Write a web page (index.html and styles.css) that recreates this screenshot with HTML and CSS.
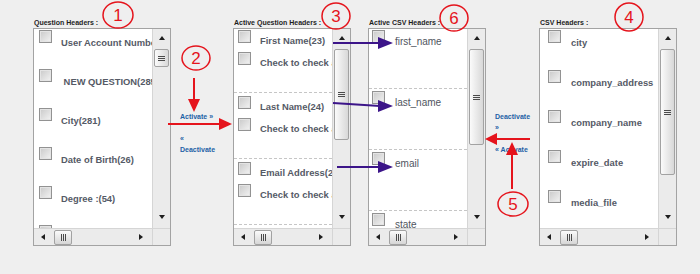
FILE: index.html
```html
<!DOCTYPE html>
<html lang="en">
<head>
    <meta charset="UTF-8">
    <title>Map CSV Headers</title>
    <link rel="stylesheet" href="styles.css">
</head>
<body>
    <div class="mapper">
        <!-- question headers -->
        <div class="panel panel-wide">
            <div class="panel-title">Question Headers :</div>
            <div class="box">
                <div class="list list-q">
                    <div class="item"><span class="check"></span><span class="name">User Account Number(22)</span></div>
                    <div class="item"><span class="check"></span><span class="name">&nbsp;NEW QUESTION(285)</span></div>
                    <div class="item"><span class="check"></span><span class="name">City(281)</span></div>
                    <div class="item"><span class="check"></span><span class="name">Date of Birth(26)</span></div>
                    <div class="item"><span class="check"></span><span class="name">Degree :(54)</span></div>
                    <div class="item"><span class="check"></span><span class="name">Email(27)</span></div>
                </div>
                <div class="vscroll">
                    <span class="btn-up"></span>
                    <span class="vthumb" style="height: 18px"><span class="grip-h"></span></span>
                    <span class="btn-down"></span>
                </div>
                <div class="hscroll">
                    <span class="btn-left"></span>
                    <span class="hthumb"><span class="grip-v"></span></span>
                    <span class="btn-right"></span>
                </div>
                <div class="corner"></div>
            </div>
        </div>

        <div class="mover mover-left">
            <a href="#">Activate &raquo;</a>
            <a href="#">&laquo;<br>Deactivate</a>
        </div>

        <!-- active question headers -->
        <div class="panel panel-narrow">
            <div class="panel-title">Active Question Headers :</div>
            <div class="box">
                <div class="list list-aq">
                    <div class="group">
                        <div class="row"><span class="check"></span><span class="name">First Name(23)</span></div>
                        <div class="row"><span class="check"></span><span class="name">Check to check all</span></div>
                    </div>
                    <div class="group">
                        <div class="row"><span class="check"></span><span class="name">Last Name(24)</span></div>
                        <div class="row"><span class="check"></span><span class="name">Check to check all</span></div>
                    </div>
                    <div class="group">
                        <div class="row"><span class="check"></span><span class="name">Email Address(25)</span></div>
                        <div class="row"><span class="check"></span><span class="name">Check to check all</span></div>
                    </div>
                    <div class="group">
                        <div class="row"><span class="check"></span><span class="name">Phone(29)</span></div>
                    </div>
                </div>
                <div class="vscroll">
                    <span class="btn-up"></span>
                    <span class="vthumb" style="height: 91px"><span class="grip-h"></span></span>
                    <span class="btn-down"></span>
                </div>
                <div class="hscroll">
                    <span class="btn-left"></span>
                    <span class="hthumb"><span class="grip-v"></span></span>
                    <span class="btn-right"></span>
                </div>
                <div class="corner"></div>
            </div>
        </div>

        <!-- active csv headers -->
        <div class="panel panel-narrow panel-gap">
            <div class="panel-title">Active CSV Headers :</div>
            <div class="box">
                <div class="list list-ac">
                    <div class="group"><span class="check"></span><span class="name">first_name</span></div>
                    <div class="group"><span class="check"></span><span class="name">last_name</span></div>
                    <div class="group"><span class="check"></span><span class="name">email</span></div>
                    <div class="group"><span class="check"></span><span class="name">state</span></div>
                </div>
                <div class="vscroll">
                    <span class="btn-up"></span>
                    <span class="vthumb" style="height: 96px"><span class="grip-h"></span></span>
                    <span class="btn-down"></span>
                </div>
                <div class="hscroll">
                    <span class="btn-left"></span>
                    <span class="hthumb"><span class="grip-v"></span></span>
                    <span class="btn-right"></span>
                </div>
                <div class="corner"></div>
            </div>
        </div>

        <div class="mover mover-right">
            <a href="#">Deactivate<br>&raquo;</a>
            <a href="#">&laquo; Activate</a>
        </div>

        <!-- csv headers -->
        <div class="panel panel-wide">
            <div class="panel-title">CSV Headers :</div>
            <div class="box">
                <div class="list list-c">
                    <div class="item"><span class="check"></span><span class="name">city</span></div>
                    <div class="item"><span class="check"></span><span class="name">company_address</span></div>
                    <div class="item"><span class="check"></span><span class="name">company_name</span></div>
                    <div class="item"><span class="check"></span><span class="name">expire_date</span></div>
                    <div class="item"><span class="check"></span><span class="name">media_file</span></div>
                    <div class="item"><span class="check"></span><span class="name">phone</span></div>
                </div>
                <div class="vscroll">
                    <span class="btn-up"></span>
                    <span class="vthumb" style="height: 126px"><span class="grip-h"></span></span>
                    <span class="btn-down"></span>
                </div>
                <div class="hscroll">
                    <span class="btn-left"></span>
                    <span class="hthumb"><span class="grip-v"></span></span>
                    <span class="btn-right"></span>
                </div>
                <div class="corner"></div>
            </div>
        </div>
    </div>

    <!-- annotation layer -->
    <svg class="notes" width="700" height="274" viewBox="0 0 700 274">
        <g class="red">
            <ellipse cx="118" cy="15" rx="15" ry="13"/>
            <ellipse cx="196" cy="58" rx="14" ry="12"/>
            <ellipse cx="336" cy="16" rx="14" ry="13"/>
            <ellipse cx="454" cy="18" rx="14" ry="13"/>
            <ellipse cx="629" cy="17" rx="14" ry="14"/>
            <ellipse cx="513" cy="204" rx="15" ry="12"/>
            <line x1="194" y1="78" x2="194" y2="100"/>
            <line x1="168" y1="124" x2="221" y2="124"/>
            <line x1="512" y1="189" x2="512" y2="153"/>
            <line x1="530" y1="139" x2="496" y2="139"/>
        </g>
        <g class="red-fill">
            <polygon points="188,99 200,99 194,112"/>
            <polygon points="219,118 219,130 232,124"/>
            <polygon points="506,155 518,155 512,142"/>
            <polygon points="497,133 497,145 485,139"/>
        </g>
        <g class="num">
            <text x="118" y="21">1</text>
            <text x="196" y="64">2</text>
            <text x="336" y="22">3</text>
            <text x="454" y="24">6</text>
            <text x="629" y="23">4</text>
            <text x="513" y="210">5</text>
        </g>
        <g class="purple">
            <line x1="333" y1="43" x2="380" y2="43"/>
            <line x1="333" y1="103" x2="380" y2="106"/>
            <line x1="337" y1="167" x2="380" y2="167"/>
        </g>
        <g class="purple-fill">
            <polygon points="378,37 378,49 393,43"/>
            <polygon points="378,100 378,112 393,106"/>
            <polygon points="378,161 378,173 393,167"/>
        </g>
    </svg>
</body>
</html>
```

FILE: styles.css
```css
* {
    box-sizing: border-box;
}
body {
    margin: 0;
    position: relative;
    height: 274px;
    overflow: hidden;
    background-color: #efefef;
    font-family: 'Liberation Sans', Arial, sans-serif;
    color: #333;
}
.mapper {
    display: flex;
    align-items: flex-start;
    padding: 18px 0 0 33px;
}
.panel-title {
    font-size: 7px;
    font-weight: bold;
    line-height: 10px;
    color: #1e1e1e;
    white-space: nowrap;
    padding-left: 1px;
}
.panel-wide .box {
    width: 138px;
}
.panel-narrow .box {
    width: 118px;
}
.panel-gap {
    margin-left: 17px;
}
.box {
    display: grid;
    grid-template-columns: 1fr 18px;
    grid-template-rows: 199px 17px;
    border: 1px solid #a3a3a3;
    background-color: white;
}
.list {
    overflow: hidden;
    white-space: nowrap;
}
.check {
    flex: none;
    width: 13px;
    height: 13px;
    border: 1px solid #929292;
    background: linear-gradient(135deg, #c9c9c9 0%, #f3f3f3 100%);
    box-shadow: inset 0 0 0 1px #e4e4e4;
}
.name {
    font-size: 9.4px;
    font-weight: bold;
    color: #555a66;
}

/* question headers */
.list-q .item {
    display: flex;
    height: 39px;
    padding: 1px 0 0 5px;
}
.list-q .check {
    margin-right: 9px;
}
.list-q .name {
    margin-top: 7px;
    line-height: 11px;
}

/* active question headers */
.list-aq .group {
    height: 66px;
    padding-top: 3px;
    border-bottom: 1px dashed #c6c6c6;
}
.list-aq .group:first-child {
    margin-top: -2px;
}
.list-aq .row {
    display: flex;
    height: 22px;
    padding-left: 4px;
}
.list-aq .check {
    margin-right: 9px;
}
.list-aq .name {
    line-height: 22px;
}

/* active csv headers */
.list-ac .group {
    display: flex;
    height: 61px;
    padding: 2px 0 0 3px;
    border-bottom: 1px dashed #c6c6c6;
}
.list-ac .group:first-child {
    margin-top: -1px;
}
.list-ac .check {
    margin-right: 10px;
}
.list-ac .name {
    font-size: 10px;
    font-weight: normal;
    color: #505560;
    margin-top: 6px;
    line-height: 11px;
}

/* csv headers */
.list-c .item {
    display: flex;
    height: 40px;
    padding: 1px 0 0 8px;
}
.list-c .check {
    margin-right: 10px;
}
.list-c .name {
    margin-top: 6.5px;
    line-height: 11px;
}

/* scrollbars */
.vscroll {
    display: flex;
    flex-direction: column;
    align-items: center;
    background-color: #ebebeb;
    border-left: 1px solid #d5d5d5;
}
.hscroll {
    display: flex;
    align-items: center;
    background-color: #ebebeb;
    border-top: 1px solid #d5d5d5;
}
.corner {
    background-color: #ebebeb;
    border-top: 1px solid #d5d5d5;
    border-left: 1px solid #d5d5d5;
}
.btn-up,
.btn-down {
    display: flex;
    align-items: center;
    justify-content: center;
    flex: none;
    width: 100%;
    height: 17px;
}
.btn-up::before {
    content: "";
    border-left: 3.5px solid transparent;
    border-right: 3.5px solid transparent;
    border-bottom: 4px solid #1e1e1e;
}
.btn-down {
    margin-top: auto;
    margin-bottom: 3px;
}
.btn-down::before {
    content: "";
    border-left: 3.5px solid transparent;
    border-right: 3.5px solid transparent;
    border-top: 4px solid #1e1e1e;
}
.btn-left,
.btn-right {
    display: flex;
    align-items: center;
    justify-content: center;
    flex: none;
    width: 17px;
    height: 100%;
}
.btn-left::before {
    content: "";
    border-top: 3.5px solid transparent;
    border-bottom: 3.5px solid transparent;
    border-right: 4px solid #1e1e1e;
}
.btn-right {
    margin-left: auto;
    margin-right: 3px;
}
.btn-right::before {
    content: "";
    border-top: 3.5px solid transparent;
    border-bottom: 3.5px solid transparent;
    border-left: 4px solid #1e1e1e;
}
.vthumb {
    display: flex;
    align-items: center;
    justify-content: center;
    flex: none;
    width: 15px;
    margin-top: 3px;
    border: 1px solid #a2a2a2;
    border-radius: 2px;
    background: linear-gradient(to right, #fbfbfb, #d8d8d8);
}
.hthumb {
    display: flex;
    align-items: center;
    justify-content: center;
    flex: none;
    width: 18px;
    height: 15px;
    margin-left: 3px;
    border: 1px solid #a2a2a2;
    border-radius: 2px;
    background: linear-gradient(to bottom, #fbfbfb, #d6d6d6);
}
.grip-h {
    width: 7px;
    height: 5px;
    background: repeating-linear-gradient(to bottom, #4b4b4b 0 1px, transparent 1px 2px);
}
.grip-v {
    width: 5px;
    height: 7px;
    background: repeating-linear-gradient(to right, #4b4b4b 0 1px, transparent 1px 2px);
}

/* activate / deactivate links */
.mover {
    padding: 93px 0 0 9px;
}
.mover-left {
    width: 62px;
}
.mover-right {
    width: 53px;
}
.mover a {
    display: block;
    font-size: 7px;
    font-weight: bold;
    line-height: 11px;
    color: #1d5fa6;
    text-decoration: none;
    white-space: nowrap;
}
.mover a + a {
    margin-top: 11px;
}

/* annotations */
.notes {
    position: absolute;
    left: 0;
    top: 0;
    pointer-events: none;
}
.notes .red {
    fill: none;
    stroke: #e5141c;
    stroke-width: 2;
}
.notes .red ellipse {
    stroke-width: 1.5;
}
.notes .red-fill {
    fill: #e5141c;
}
.notes .num text {
    font-family: 'Liberation Sans', Arial, sans-serif;
    font-size: 17px;
    fill: #e5141c;
    text-anchor: middle;
}
.notes .purple {
    stroke: #3c1589;
    stroke-width: 2;
}
.notes .purple-fill {
    fill: #3c1589;
}
```
